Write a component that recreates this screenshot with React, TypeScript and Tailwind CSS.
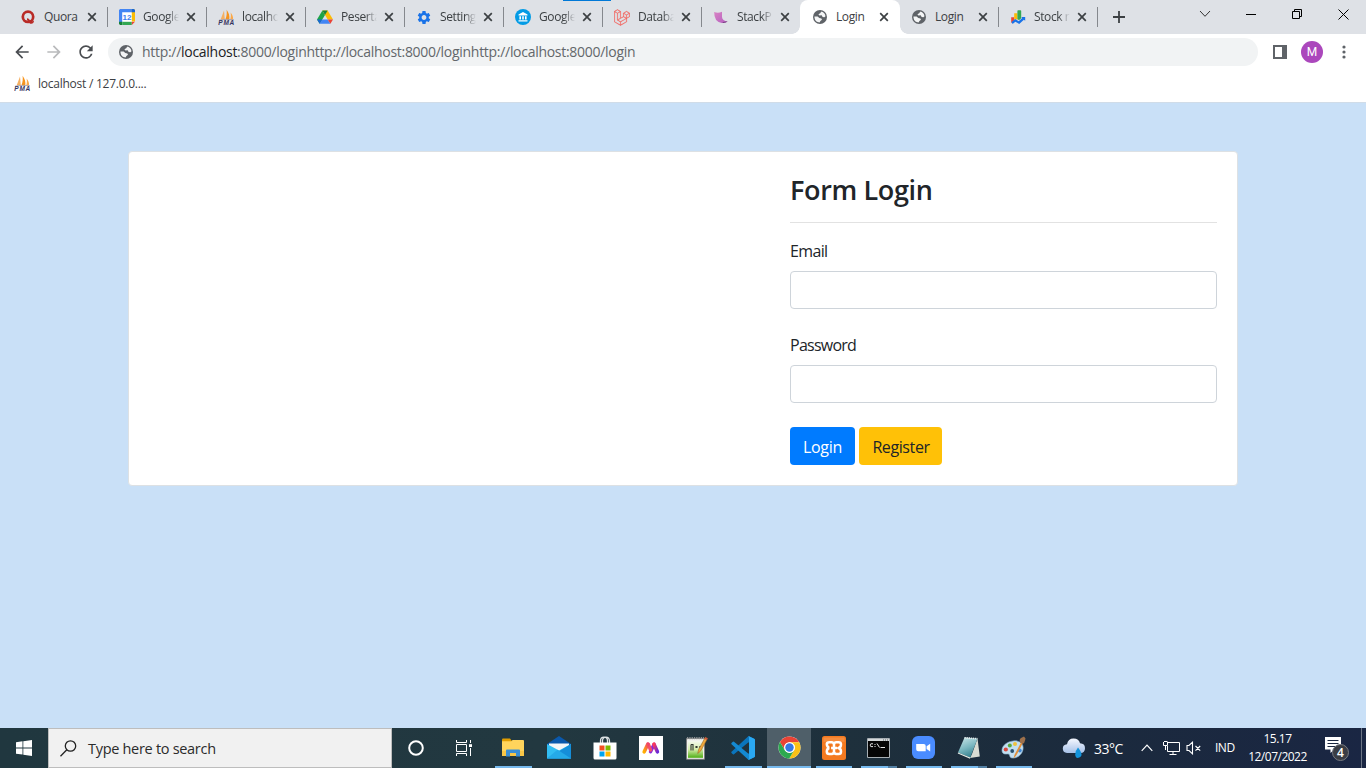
import React from "react";
import { MdArrowBack, MdArrowForward, MdRefresh, MdSettings } from "react-icons/md";
import { FaLaravel } from "react-icons/fa";

const PmaIcon = () => (
  <svg width="17" height="17" viewBox="0 0 17 17" className="shrink-0">
    <path d="M6 1.5 6.8 10.5H2.6Z" fill="#f5b062" />
    <path d="M8.6 .8C11 4 11.8 7 11.3 10.5H7.4C8.8 7 9 4 8.6 .8Z" fill="#f7941d" />
    <path d="M12.6 3.6C14.6 6 15.3 8 15 10.4H12.3C13 8 13 6 12.6 3.6Z" fill="#fba94a" />
    <path d="M1 11.2Q8 9.6 16 10.8" stroke="#8e8ea8" strokeWidth=".7" fill="none" />
    <text x="0.3" y="16" fontFamily="Liberation Sans, sans-serif" fontWeight="700" fontStyle="italic" fontSize="6.5" fill="#34345e" textLength="16">PMA</text>
  </svg>
);

const GlobeIcon = () => (
  <svg width="14" height="14" viewBox="0 0 14 14" className="shrink-0">
    <circle cx="7" cy="7" r="7" fill="#5f6368" />
    <path d="M8.6 1.6Q11.9 2.6 12.5 6.2L11.4 7.3 9.6 6.9 8.7 5.3 6.4 5.4 5.4 4.3 7.2 3.2 7.8 2.2Z" fill="#f4f5f6" />
    <path d="M1.5 6.4 4.6 6.6 6.3 8.1 8.4 8.4 9 9.8 7.4 11.1 6.6 12.6Q2.2 12.2 1.5 7.8Z" fill="#f4f5f6" />
  </svg>
);

const QuoraIcon = () => (
  <svg width="16" height="16" viewBox="0 0 16 16">
    <circle cx="8" cy="7.8" r="5.2" fill="none" stroke="#b92b27" strokeWidth="2.7" />
    <path d="M7 9.4C9.4 9 10 12.8 11.6 12.8Q12.6 12.8 12.8 11.8H14Q13.8 14.8 11.2 14.8C8.6 14.8 8.7 11.4 7 11.2Z" fill="#b92b27" />
  </svg>
);

const CalendarIcon = () => (
  <svg width="16" height="16" viewBox="0 0 16 16">
    <path d="M1 0H15L16 1V12L12 16H1L0 15V1Z" fill="#fff" />
    <path d="M1 0H13V3.2H3.2V13H0V1Z" fill="#4285f4" />
    <path d="M12.8 0H15L16 1V12.5H12.8Z" fill="#fbbc04" />
    <path d="M12.8 0H15L16 1V3.2H12.8Z" fill="#1967d2" />
    <path d="M0 12.8H3.2V16H1L0 15Z" fill="#188038" />
    <path d="M3.2 12.8H12.8V16H3.2Z" fill="#34a853" />
    <path d="M12.8 12.8H16L12.8 16Z" fill="#ea4335" />
    <text x="8" y="11" textAnchor="middle" fontFamily="Liberation Sans, sans-serif" fontWeight="700" fontSize="8" fill="#3b7ded">12</text>
  </svg>
);

const DriveIcon = () => (
  <svg width="16" height="16" viewBox="0 0 16 16">
    <path d="M5.4 1.5 8 6 2.7 14.8 0 10.6Z" fill="#1ea446" />
    <path d="M5.4 1.5H10.6L16 10.6H10.7Z" fill="#fbbc04" />
    <path d="M5.4 1.5H10.6L8 6Z" fill="#188038" />
    <path d="M5.3 10.6H10.7L13.4 14.8H2.7Z" fill="#4285f4" />
    <path d="M0 10.6H5.3L2.7 14.8Z" fill="#1967d2" />
    <path d="M10.7 10.6H16L13.4 14.8Z" fill="#ea4335" />
  </svg>
);

const BankIcon = () => (
  <svg width="16" height="16" viewBox="0 0 16 16">
    <circle cx="8" cy="8" r="8" fill="#039be5" />
    <path d="M8 3 12.5 5.4V6.5H3.5V5.4ZM4.4 7.2H6V10.6H4.4ZM7.2 7.2H8.8V10.6H7.2ZM10 7.2H11.6V10.6H10ZM3.5 11.2H12.5V12.6H3.5Z" fill="#fff" />
  </svg>
);

const StackIcon = () => (
  <svg width="16" height="16" viewBox="0 0 16 16">
    <defs>
      <linearGradient id="stackFill" x1="0" y1="0" x2="1" y2="1">
        <stop offset="0" stopColor="#d983c4" />
        <stop offset="1" stopColor="#b45fc0" />
      </linearGradient>
    </defs>
    <path d="M1.2 3Q5 4.4 9 2.8V8Q9.3 11.6 14.6 12.6Q13 14 8.8 13.9Q1 13 1.2 3Z" fill="url(#stackFill)" />
    <path d="M10 12.9Q12 12.4 14.6 12.6Q13 14 9.5 13.9Z" fill="#75427e" />
  </svg>
);

const StockIcon = () => (
  <svg width="16" height="16" viewBox="0 0 16 16">
    <path d="M1.2 8.2H4.2V11.4L1.2 14Z" fill="#ea4335" />
    <path d="M4.2 4.2H7.4V11L5.6 9.8 4.2 11.3Z" fill="#fbbc04" />
    <path d="M7.4 2Q7.4 1.2 8.2 1.2H10.4Q11.2 1.2 11.2 2V9.2L9 11.2 7.4 10Z" fill="#34a853" />
    <path d="M1.5 13 5.2 9.9 8.7 12.3 12.2 9.1 11.2 8H15.2V11.8L13.9 10.7 9.2 15.1 5.4 12.7 2.6 15Z" fill="#1a73e8" />
  </svg>
);

const TabClose = () => (
  <svg width="10" height="10" viewBox="0 0 10 10" className="shrink-0">
    <path d="M1.2 1.2 8.8 8.8M8.8 1.2 1.2 8.8" stroke="#3c4043" strokeWidth="1.7" />
  </svg>
);

type TabData = { title: string; icon: React.ReactNode; active?: boolean; bar?: boolean; fade?: boolean };

const tabs: TabData[] = [
  { title: "Quora", icon: <QuoraIcon />, bar: true },
  { title: "Google", icon: <CalendarIcon />, bar: true, fade: true },
  { title: "localho", icon: <PmaIcon />, bar: true, fade: true },
  { title: "Peserta", icon: <DriveIcon />, bar: true, fade: true },
  { title: "Setting", icon: <MdSettings size={17} color="#1a73e8" />, bar: true, fade: true },
  { title: "Google", icon: <BankIcon />, bar: true, fade: true },
  { title: "Databa", icon: <FaLaravel size={17} color="#f4554f" stroke="#f4645f" strokeWidth={9} />, bar: true, fade: true },
  { title: "StackP", icon: <StackIcon />, fade: true },
  { title: "Login", icon: <GlobeIcon />, active: true },
  { title: "Login", icon: <GlobeIcon />, bar: true },
  { title: "Stock r", icon: <StockIcon />, bar: true, fade: true },
];

const fadeMask = "[mask-image:linear-gradient(to_right,black_68%,transparent_100%)]";

function Tab({ tab }: { tab: TabData }) {
  return (
    <div className={`relative flex h-[34px] shrink-0 items-center pl-3 last-of-type:mr-0 ${tab.active ? "-mr-px w-[100px] rounded-t-lg bg-white" : "w-[99px]"}`}>
      {tab.active && (
        <>
          <span className="absolute -left-2 bottom-0 size-2 bg-[radial-gradient(circle_at_0_0,transparent_7.5px,#fff_8px)]" />
          <span className="absolute -right-2 bottom-0 size-2 bg-[radial-gradient(circle_at_100%_0,transparent_7.5px,#fff_8px)]" />
        </>
      )}
      <span className="flex w-4 shrink-0 justify-center">{tab.icon}</span>
      <span className={`ml-2 w-9 shrink-0 whitespace-nowrap text-[12px] leading-4 tracking-[-0.4px] text-[#3c4043] ${tab.fade ? fadeMask : ""}`}>{tab.title}</span>
      <span className="ml-[7px] flex">
        <TabClose />
      </span>
      {tab.bar && <span className="absolute -right-px top-[7px] h-5 w-px bg-[#85888d]" />}
    </div>
  );
}

function TabStrip() {
  return (
    <div className="relative flex h-[34px] bg-[#dee1e6] pl-2">
      <span className="absolute left-[563px] top-0 h-px w-12 bg-[#0078d7]" />
      {tabs.map((t, i) => (
        <Tab key={i} tab={t} />
      ))}
      <div className="flex w-11 items-center justify-center">
        <svg width="12" height="12" viewBox="0 0 12 12"><path d="M6 0V12M0 6H12" stroke="#3c4043" strokeWidth="1.8" /></svg>
      </div>
      <div className="ml-auto flex h-7 items-center">
        <div className="flex w-[46px] justify-center">
          <svg width="12" height="8" viewBox="0 0 12 8"><path d="M1 1 6 6.3 11 1" stroke="#333" fill="none" /></svg>
        </div>
        <div className="flex w-[46px] justify-center">
          <svg width="10" height="10" viewBox="0 0 10 10"><path d="M0 5.5H10" stroke="#000" /></svg>
        </div>
        <div className="flex w-[46px] justify-center">
          <svg width="10" height="10" viewBox="0 0 10 10"><path d="M.5 2.5H7.5V9.5H.5ZM2.5 2.5V.5H9.5V7.5H7.5" stroke="#000" fill="none" /></svg>
        </div>
        <div className="flex w-[46px] justify-center">
          <svg width="11" height="11" viewBox="0 0 11 11"><path d="M.5 .5 10.5 10.5M10.5 .5 .5 10.5" stroke="#000" /></svg>
        </div>
      </div>
    </div>
  );
}

function Toolbar() {
  return (
    <div className="flex h-[36px] items-center bg-white pl-3">
      <MdArrowBack size={20} color="#4a4d51" />
      <span className="w-3" />
      <MdArrowForward size={20} color="#b9babc" />
      <span className="w-3" />
      <MdRefresh size={20} color="#4a4d51" />
      <div className="ml-3 flex h-7 w-[1150px] items-center rounded-full bg-[#f1f3f4] pl-[11px]">
        <GlobeIcon />
        <span className="ml-[9px] whitespace-nowrap text-[14px] leading-5 tracking-[-0.29px] text-[#63676b]">
          http://<span className="text-[#202124]">localhost</span>:8000/loginhttp://localhost:8000/loginhttp://localhost:8000/login
        </span>
      </div>
      <svg className="ml-[15px]" width="14" height="14" viewBox="0 0 14 14"><path d="M0 0H14V14H0ZM2 2V12H9V2Z" fill="#5f6368" fillRule="evenodd" /></svg>
      <span className="ml-[14px] flex size-[22px] items-center justify-center rounded-full bg-[#ab47bc] font-[Roboto] text-[12px] text-white">M</span>
      <svg className="ml-[19px]" width="4" height="14" viewBox="0 0 4 14"><g fill="#5f6368"><circle cx="2" cy="2" r="1.6" /><circle cx="2" cy="7" r="1.6" /><circle cx="2" cy="12" r="1.6" /></g></svg>
    </div>
  );
}

function LoginCard() {
  return (
    <section className="flex h-[335px] w-[1110px] justify-end rounded border border-[#dde1e4] bg-white p-5 text-[16px] text-[#212529]">
      <form className="w-[427px]" onSubmit={(e) => e.preventDefault()}>
        <h3 className="box-content h-[50px] whitespace-nowrap border-b border-[#e2e2e2] text-[27px] font-semibold leading-[35px] tracking-[-0.35px]">Form Login</h3>
        <label className="mt-4 block pt-px leading-[23px] tracking-[-0.65px]" htmlFor="email">Email</label>
        <input id="email" className="mt-2 block h-[38px] w-full rounded border border-[#ced4da] px-3 outline-none" />
        <label className="mt-6 block pt-px leading-[23px] tracking-[-0.75px]" htmlFor="password">Password</label>
        <input id="password" type="password" className="mt-2 block h-[38px] w-full rounded border border-[#ced4da] px-3 outline-none" />
        <div className="mt-6 flex gap-1">
          <button className="h-[38px] w-[65px] rounded bg-[#007bff] pt-px tracking-[-0.3px] text-white">Login</button>
          <button className="h-[38px] w-[83px] rounded bg-[#ffc107] pl-px pt-px tracking-[-0.4px]">Register</button>
        </div>
      </form>
    </section>
  );
}

const ExplorerIcon = () => (
  <svg width="22" height="20" viewBox="0 0 22 20">
    <path d="M0 1.5Q0 .5 1 .5H8L10 3V6H0Z" fill="#e19d00" />
    <path d="M0 3.3H9.5L10.5 2H21Q22 2 22 3V18H0Z" fill="#ffd45c" />
    <path d="M0 13H22V18H0Z" fill="#f9c747" />
    <path d="M4 18.5V12.5Q4 11.5 5 11.5H17Q18 11.5 18 12.5V18.5H14V15H8V18.5Z" fill="#3a8fd5" />
  </svg>
);

const MailIcon = () => (
  <svg width="24" height="23" viewBox="0 0 24 23">
    <path d="M0 8 12 0 24 8V13H0Z" fill="#0a58ac" />
    <path d="M2 7.5H22V15H2Z" fill="#f4f5f7" />
    <path d="M0 8 12 14.5 24 8V22.5H0Z" fill="#32bdf2" />
    <path d="M24 8V22.5H0Z" fill="#158ed9" />
    <path d="M0 22.5 10.5 13.7 24 22.5Z" fill="#25aae8" />
  </svg>
);

const StoreIcon = () => (
  <svg width="24" height="24" viewBox="0 0 24 24">
    <path d="M7.5 7V5Q7.5 1.2 11 1.2T14.5 5V7M9.5 7V4.5Q9.8 1.2 13 1.2T16.5 5V7" fill="none" stroke="#dfe4e6" strokeWidth="1.3" />
    <path d="M.5 6.5H23.5V22Q23.5 23.5 22 23.5H2Q.5 23.5 .5 22Z" fill="#fff" />
    <path d="M6.5 9.5H11.5V14.5H6.5Z" fill="#f25022" />
    <path d="M12.5 9.5H17.5V14.5H12.5Z" fill="#7fba00" />
    <path d="M6.5 15.5H11.5V20.5H6.5Z" fill="#00a4ef" />
    <path d="M12.5 15.5H17.5V20.5H12.5Z" fill="#ffb900" />
  </svg>
);

const MountainIcon = () => (
  <svg width="24" height="24" viewBox="0 0 24 24">
    <defs>
      <linearGradient id="warmStroke" x1="0" y1="1" x2="1" y2="0"><stop stopColor="#ffb000" /><stop offset="1" stopColor="#f0436a" /></linearGradient>
      <linearGradient id="pinkStroke" x1="0" y1="0" x2="1" y2="1"><stop stopColor="#ff3a55" /><stop offset="1" stopColor="#6a28d9" /></linearGradient>
    </defs>
    <path d="M0 0H24V24H0Z" fill="#fff" />
    <path d="M11.5 15.8 15 8.4" stroke="#8e28d8" strokeWidth="3.4" strokeLinecap="round" />
    <path d="M15 8.2 18.4 15.8" stroke="url(#pinkStroke)" strokeWidth="3.6" strokeLinecap="round" />
    <path d="M9.3 8.2 11.6 14" stroke="#f2506c" strokeWidth="3.4" strokeLinecap="round" />
    <path d="M5.2 15.8 8.8 8.2" stroke="url(#warmStroke)" strokeWidth="3.6" strokeLinecap="round" />
  </svg>
);

const NotepadPlusIcon = () => (
  <svg width="24" height="24" viewBox="0 0 24 24">
    <defs><linearGradient id="nppFill" x1="0" y1="0" x2="0" y2="1"><stop stopColor="#f4f7ef" /><stop offset=".5" stopColor="#d5edaa" /><stop offset="1" stopColor="#4fae14" /></linearGradient></defs>
    <path d="M1.5 2.5H19.5V23.3H1.5Z" fill="#f0f0ec" stroke="#777" strokeWidth=".8" />
    <path d="M3 5H18V21.8H3Z" fill="url(#nppFill)" />
    <path d="M2 2.2H19" stroke="#8b9092" strokeWidth="2.2" strokeDasharray="1.3 1" />
    <path d="M6 14.5V8.5M6 8.5H8V14.5M10 11H13M14 11H16.5M11.5 10V12M15.3 10V12" stroke="#313632" strokeWidth="1.1" fill="none" />
    <path d="M12.7 17.5 13.6 13.5 20.3 1.2 22.6 2.4 15.8 14.9Z" fill="#efa83c" stroke="#8b5a1c" strokeWidth=".5" />
    <path d="M20.3 1.2 22.6 2.4 21.7 4 19.4 2.8Z" fill="#c95246" />
  </svg>
);

const CodeIcon = () => (
  <svg width="24" height="24" viewBox="0 0 24 24">
    <path d="M18 .3 23.2 2.8Q24 3.2 24 4V5.7L17.2 6.5 3 18.3Q2.4 18.6 1.9 18.2L.5 17Q0 16.4 .5 15.8L16.8 .8Q17.4 .1 18 .3Z" fill="#0a75bd" />
    <path d="M18 23.7 23.2 21.2Q24 20.8 24 20V18.3L17.2 17.5 3 5.7Q2.4 5.4 1.9 5.8L.5 7Q0 7.6 .5 8.2L16.8 23.2Q17.4 23.9 18 23.7Z" fill="#1489d1" />
    <path d="M18 .3 23.2 2.8Q24 3.2 24 4V20Q24 20.8 23.2 21.2L18 23.7Q17.3 23.8 17 23.1C17.8 23.8 18 23 18 22V2Q18 .8 17.2 .6Z" fill="#2aa8f2" />
  </svg>
);

const ChromeIcon = () => (
  <svg width="23" height="23" viewBox="0 0 24 24">
    <circle cx="12" cy="12" r="11.5" fill="#fff" />
    <path d="M12 6.5H22.1A11.5 11.5 0 0 0 2 6.3L7.2 14.8A5.5 5.5 0 0 1 12 6.5Z" fill="#e94335" />
    <path d="M22.1 6.5A11.5 11.5 0 0 1 11.8 23.5L16.8 14.8A5.5 5.5 0 0 0 12 6.5Z" fill="#fbc116" />
    <path d="M11.8 23.5A11.5 11.5 0 0 1 2 6.3L7.2 14.8A5.5 5.5 0 0 0 16.8 14.8Z" fill="#2da94f" />
    <circle cx="12" cy="12" r="5.6" fill="#fff" />
    <circle cx="12" cy="12" r="4.4" fill="#3578e5" />
  </svg>
);

const XamppIcon = () => (
  <svg width="24" height="24" viewBox="0 0 24 24">
    <rect width="24" height="24" rx="2.5" fill="#f47a20" />
    <path d="M1.5 1.5H22.5V6Q12 4 1.5 6Z" fill="#f99a53" opacity=".6" />
    <path d="M9 12H15M12 12V8.6Q12 6.2 14.3 6.2H16.6Q19 6.2 19 8.4Q19 11.4 16.3 12Q19 12.6 19 15.4Q19 18 16.6 18H14.3Q12 18 12 15.6V15M12 8.6Q11.8 6.2 9.6 6.2H7.4Q4.8 6.2 4.8 8.2M7.6 12Q4.8 12.6 4.8 15.4Q4.8 18 7.4 18H9.7Q12 18 12 15.6V12M4.8 8.2Q5 11.4 7.6 12" fill="none" stroke="#fff" strokeWidth="2.5" strokeLinejoin="round" />
    <path d="M8.2 9.3H8.6V14.8H8.2ZM15.4 9.3H15.8M15.4 14.8H15.8" stroke="#f47a20" strokeWidth=".9" />
  </svg>
);

const TerminalIcon = () => (
  <svg width="23" height="20" viewBox="0 0 23 20">
    <path d="M.5 .5H22.5V19.5H.5Z" fill="#050505" stroke="#a8afb4" />
    <path d="M1 1H22V3H1Z" fill="#d4d8da" />
    <path d="M16 2H17M18 2H19M20 2H21" stroke="#5b6368" />
    <path d="M6 5.8H4Q3.3 5.8 3.3 7.2T4 8.6H6M8 6V7M8 8V9M10 5.5 12.5 9.5M13.5 9.5H18" stroke="#e6e6e6" fill="none" />
  </svg>
);

const ZoomIcon = () => (
  <svg width="23" height="23" viewBox="0 0 23 23">
    <rect width="23" height="23" rx="6" fill="#4a8cff" />
    <path d="M4.2 8H11.7Q13.7 8 13.7 10V15.3H6.2Q4.2 15.3 4.2 13.3ZM14.6 10.3 18.2 7.8V15.5L14.6 13Z" fill="#fff" />
  </svg>
);

const NotebookIcon = () => (
  <svg width="24" height="23" viewBox="0 0 24 23">
    <defs><linearGradient id="noteFill" x1="0" y1="0" x2=".4" y2="1"><stop stopColor="#cfe9ec" /><stop offset=".6" stopColor="#79b6bf" /><stop offset="1" stopColor="#3d8795" /></linearGradient></defs>
    <path d="M20.5 2.5 22.8 20.5 13 22 15 18Z" fill="#d9dcd3" />
    <path d="M7.5 1.5 20.5 2.5 13.3 21.5 1 16.5Z" fill="url(#noteFill)" />
    <path d="M1 16.5 13.3 21.5 13 22.8 .8 17.6Z" fill="#e8efe9" />
    <path d="M7.5 1.7 20.5 2.7" stroke="#e6eced" strokeWidth="1.6" strokeDasharray="1.3 .8" />
  </svg>
);

const PaintIcon = () => (
  <svg width="25" height="24" viewBox="0 0 25 24">
    <path d="M12 5C19 4 23 8 22 13.5S16 22.5 11 22C7.5 21.5 9.7 17.5 6.5 18S.5 17.5 1 13.5 6 5.7 12 5Z" fill="#c2dff1" stroke="#7fa8c4" strokeWidth=".6" />
    <circle cx="4.8" cy="13.5" r="2.1" fill="#d8483e" />
    <circle cx="8.8" cy="9.4" r="2" fill="#58a83f" />
    <circle cx="14" cy="8" r="2" fill="#f0c23c" />
    <circle cx="11.2" cy="15" r="1.9" fill="#28506e" />
    <circle cx="18.8" cy="14.5" r="1.9" fill="#4289d5" />
    <path d="M12.5 22.5Q13 19 15 16L20 6.5 21.6 7.4 16.6 17Q15 20.5 12.5 22.5Z" fill="#e1903b" />
    <path d="M19 6.5Q18 3 20 2L23 .6 24.5 2.6 24 4.5Q23.5 7.5 21.7 7.8Z" fill="#9d704b" />
  </svg>
);

type TaskbarApp = { w: string; icon: React.ReactNode; line?: string; stacked?: boolean; active?: boolean };

const apps: TaskbarApp[] = [
  { w: "w-[46px]", icon: <ExplorerIcon />, line: "w-[37px]" },
  { w: "w-[46px]", icon: <MailIcon /> },
  { w: "w-[46px]", icon: <StoreIcon /> },
  { w: "w-[46px]", icon: <MountainIcon /> },
  { w: "w-[46px]", icon: <NotepadPlusIcon /> },
  { w: "w-[46px]", icon: <CodeIcon />, line: "w-[37px]" },
  { w: "w-[46px]", icon: <ChromeIcon />, line: "w-[44px]", active: true },
  { w: "w-[44px]", icon: <XamppIcon />, line: "w-9" },
  { w: "w-[45px]", icon: <TerminalIcon />, line: "w-9", stacked: true },
  { w: "w-[45px]", icon: <ZoomIcon />, line: "w-9" },
  { w: "w-[45px]", icon: <NotebookIcon />, line: "w-9", stacked: true },
  { w: "w-[45px]", icon: <PaintIcon />, line: "w-9" },
];

function Taskbar() {
  return (
    <footer className="flex h-10 items-stretch bg-[linear-gradient(90deg,#20373f_0%,#223840_40%,#1e303c_62%,#1b2a3d_80%,#1a2643_100%)] text-white">
      <div className="flex w-12 items-center justify-center">
        <svg width="16" height="16" viewBox="0 0 16 16"><path d="M0 2.2 6.5 1.3V7.5H0ZM7.3 1.2 16 0V7.5H7.3ZM0 8.4H6.5V14.6L0 13.7ZM7.3 8.4H16V16L7.3 14.8Z" fill="#fff" /></svg>
      </div>
      <div className="flex w-[344px] items-center border border-[#bdbdbd] bg-[#f1f1f1] pl-[11px] text-[#2b2b2b]">
        <svg width="17" height="17" viewBox="0 0 17 17"><circle cx="10.5" cy="6" r="5.2" fill="none" stroke="#222" strokeWidth="1.3" /><path d="M6.8 9.8 .5 16.2" stroke="#222" strokeWidth="1.3" /></svg>
        <span className="ml-[11px] whitespace-nowrap pt-px text-[14.5px] tracking-[-0.3px]">Type here to search</span>
      </div>
      <div className="flex w-12 items-center justify-center">
        <svg width="16" height="16" viewBox="0 0 16 16"><circle cx="8" cy="8" r="6.8" fill="none" stroke="#fff" strokeWidth="2" /></svg>
      </div>
      <div className="mr-[3px] flex w-[47px] items-center justify-center">
        <svg width="16" height="16" viewBox="0 0 16 16"><path d="M.5 0V2.5H10.5V0M.5 16V13.5H10.5V16M.5 4.5H10.5V11.5H.5ZM14.5 0V3M14.5 8V16" fill="none" stroke="#fff" /><path d="M13 4.2H16V7H13Z" fill="#fff" /></svg>
      </div>
      {apps.map((a, i) => (
        <div key={i} className={`flex shrink-0 justify-center ${a.w}`}>
          <div className={`flex flex-col items-center ${a.line ?? "w-9"} ${a.active ? "bg-[#4f5f69]" : ""}`}>
            <span className="flex h-[38px] items-center pt-px">{a.icon}</span>
            {a.line && (
              <span className="flex h-0.5 w-full">
                <span className="grow bg-[#76b9ed]" />
                {a.stacked && <span className="w-[9px] bg-[#527fa3]" />}
              </span>
            )}
          </div>
        </div>
      ))}
      <div className="ml-[26px] flex items-center">
        <svg width="24" height="22" viewBox="0 0 24 22">
          <defs><linearGradient id="cloudFill" x1="0" y1="0" x2="0" y2="1"><stop stopColor="#f5f8ff" /><stop offset="1" stopColor="#a6c1e8" /></linearGradient></defs>
          <path d="M5 16Q.8 15.5 .8 11.5T5 7.2Q6 1.5 11.5 1.5T18 6.3Q23 6.5 23 11.2T18.5 16Z" fill="url(#cloudFill)" />
          <path d="M16 10.5Q19.5 15 19.5 17.5T16.5 20.8 13.2 17.8 16 10.5Z" fill="#1294dd" />
        </svg>
        <span className="ml-2 w-[31px] whitespace-nowrap pt-px text-[14px] tracking-[-0.5px]">33°C</span>
        <svg className="ml-[16px]" width="12" height="8" viewBox="0 0 12 8"><path d="M.7 6.8 6 1.2 11.3 6.8" fill="none" stroke="#fff" strokeWidth="1.2" /></svg>
        <svg className="ml-[10px]" width="17" height="14" viewBox="0 0 17 14"><path d="M5 1.5H16.5V10.5H4.5V5M10 10.5V13.5M6.5 13.5H13.5M.5 1V4.5H4.5V.5M2.5 4.5V9M1 .5H4" fill="none" stroke="#fff" /></svg>
        <svg className="ml-[6px]" width="16" height="14" viewBox="0 0 16 14"><path d="M1 4.5H3L6.5 1.2V12.8L3 9.5H1ZM9.5 5 14.2 9.7M14.2 5 9.5 9.7" fill="none" stroke="#fff" strokeWidth="1.1" /></svg>
        <span className="ml-[13px] w-5 whitespace-nowrap text-[12px] tracking-[-0.5px]">IND</span>
      </div>
      <div className="ml-[13px] flex w-[59px] flex-col items-center justify-center whitespace-nowrap text-[12px] leading-[18px] tracking-[-0.5px]">
        <span>15.17</span>
        <span>12/07/2022</span>
      </div>
      <div className="ml-[17px] flex items-center">
        <svg width="26" height="26" viewBox="0 0 26 26">
          <path d="M1 2H17V14.5H10L6.5 18V14.5H1Z" fill="#fff" />
          <path d="M3.5 5.5H14.5M3.5 8.5H14.5M3.5 11.5H11" stroke="#1b2840" />
          <circle cx="16.5" cy="17.5" r="8" fill="#3a3d44" stroke="#777b82" />
          <text x="16.5" y="22" textAnchor="middle" fontSize="12" fontWeight="600" fill="#fff">4</text>
        </svg>
      </div>
      <div className="ml-auto w-[5px] border-l border-[#6c7585]" />
    </footer>
  );
}

export default function App() {
  return (
    <div className="flex h-screen w-full flex-col overflow-hidden font-['Open_Sans',_'Noto_Sans',sans-serif]">
      <TabStrip />
      <Toolbar />
      <div className="flex h-[33px] items-center gap-[7px] border-b border-[#d0dce8] bg-white pb-[5px] pl-[14px]">
        <PmaIcon />
        <span className="whitespace-nowrap text-[12px] tracking-[-0.25px] text-[#3c4043]">localhost / 127.0.0....</span>
      </div>
      <main className="flex grow justify-center bg-[#c9e0f7] pt-12">
        <LoginCard />
      </main>
      <Taskbar />
    </div>
  );
}
